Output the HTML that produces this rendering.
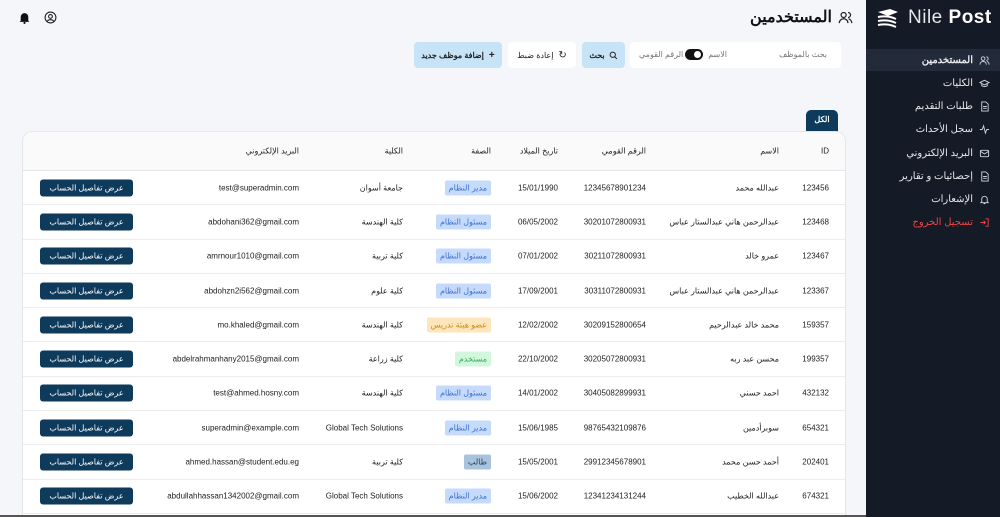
<!DOCTYPE html>
<html style="width:1000px;height:517px;overflow:hidden"><head><meta charset="utf-8"><style>
*{box-sizing:border-box;margin:0;padding:0}
body{width:1000px;height:517px;overflow:hidden;background:#f5f6fa;font-family:"Liberation Sans","Noto Sans CJK SC",sans-serif;position:relative;color:#222}
.abs{position:absolute}
.side{left:866px;top:0;width:134px;height:517px;background:#141a26}
.nav{position:absolute;right:0;width:134px;height:22px;display:flex;align-items:center;justify-content:flex-end;gap:6px;padding-right:10px;font-size:10px;color:#e5e7eb;direction:ltr}
.nav svg{width:11px;height:11px;stroke:#cbd5e1;fill:none;stroke-width:2}
.card{left:22px;top:131px;width:824px;height:386px;background:#fff;border:1px solid #e3e6ea;border-bottom:none;border-radius:10px 10px 0 0;overflow:hidden}
.hdr{position:absolute;left:0;top:0;width:824px;height:39px;background:#fafafa;border-bottom:1px solid #e5e7eb}
.row{position:absolute;left:0;width:824px;height:34.3px;border-bottom:1px solid #ececec}
.c{position:absolute;top:50%;transform:translateY(-50%);font-size:8px;color:#222;white-space:nowrap}
.r{direction:rtl}
.b{padding:3px 4px;border-radius:2px;font-size:8px}
.blue{background:#c6dbfb;color:#3c6fcf}
.org{background:#fde6bb;color:#c98a1a}
.grn{background:#d3f7dd;color:#2fae5a}
.stu{background:#a9c3dd;color:#1f3f66}
.btn{position:absolute;left:17px;top:50%;transform:translateY(-50%);width:93px;height:17px;background:#0e3a5c;color:#fff;font-size:8px;border-radius:3px;display:flex;align-items:center;justify-content:center}
</style></head><body>
<div class="abs side">
 <div class="abs" style="left:10px;top:7px;display:flex;align-items:center;gap:6px">
  <svg width="26" height="20" viewBox="0 0 26 20"><path d="M2 4 L14 1 L22 4 L12 8Z" fill="#fff"/><path d="M2 9 Q12 7 20 11 M2 13 Q12 11 20 15 M2 17 Q12 15 20 19" stroke="#fff" stroke-width="2" fill="none"/></svg>
  <span style="color:#fff;font-size:19px;letter-spacing:0.5px"><span style="font-weight:300;color:#e5e7eb">Nile</span> <b>Post</b></span>
 </div>
 <div class="nav" style="top:49px;background:#232b3a;font-weight:bold">المستخدمين<svg viewBox="0 0 24 24"><circle cx="9" cy="8" r="4"/><path d="M2 21c0-4 3-7 7-7s7 3 7 7M16 4a4 4 0 010 8M22 21c0-3-2-6-5-7"/></svg></div>
 <div class="nav" style="top:72px">الكليات<svg viewBox="0 0 24 24"><path d="M2 10l10-5 10 5-10 5z M6 12v5c3 2 9 2 12 0v-5"/></svg></div>
 <div class="nav" style="top:95px">طلبات التقديم<svg viewBox="0 0 24 24"><path d="M6 2h9l5 5v15H6z M9 12h8M9 16h8"/></svg></div>
 <div class="nav" style="top:118px">سجل الأحداث<svg viewBox="0 0 24 24"><path d="M2 12h5l3-8 4 16 3-8h5"/></svg></div>
 <div class="nav" style="top:142px">البريد الإلكتروني<svg viewBox="0 0 24 24"><rect x="3" y="5" width="18" height="14" rx="2"/><path d="M3 7l9 6 9-6"/></svg></div>
 <div class="nav" style="top:165px">إحصائيات و تقارير<svg viewBox="0 0 24 24"><path d="M6 2h9l5 5v15H6z M9 12h8M9 16h8"/></svg></div>
 <div class="nav" style="top:188px">الإشعارات<svg viewBox="0 0 24 24"><path d="M6 17V11a6 6 0 0112 0v6l2 2H4z M10 21h4"/></svg></div>
 <div class="nav" style="top:211px;color:#ef4444">تسجيل الخروج<svg viewBox="0 0 24 24" style="stroke:#ef4444"><path d="M14 4h6v16h-6 M3 12h11 M10 8l4 4-4 4"/></svg></div>
</div>

<div class="abs" style="right:147px;top:7px;display:flex;align-items:center;gap:6px;direction:ltr">
 <span style="font-size:16px;font-weight:bold;color:#111">المستخدمين</span>
 <svg width="15" height="15" viewBox="0 0 24 24" fill="none" stroke="#222" stroke-width="2"><circle cx="9" cy="8" r="4"/><path d="M2 21c0-4 3-7 7-7s7 3 7 7M16 4a4 4 0 010 8M22 21c0-3-2-6-5-7"/></svg>
</div>
<svg class="abs" style="left:18px;top:11px" width="13" height="13" viewBox="0 0 24 24"><path d="M5 18V11a7 7 0 0114 0v7l2 2H3z" fill="#111"/><circle cx="12" cy="22" r="2" fill="#111"/></svg>
<svg class="abs" style="left:44px;top:11px" width="13" height="13" viewBox="0 0 24 24" fill="none" stroke="#222" stroke-width="2"><circle cx="12" cy="12" r="10"/><circle cx="12" cy="10" r="3.5"/><path d="M6 19c2-4 10-4 12 0"/></svg>

<div class="abs" style="left:630px;top:42px;width:211px;height:26px;background:#fff;border-radius:4px;font-size:8px;color:#777">
 <span class="abs" style="right:14px;top:8px">بحث بالموظف</span>
 <span class="abs" style="right:114px;top:8px">الاسم</span>
 <div class="abs" style="left:55px;top:7px;width:18px;height:11px;background:#111;border-radius:6px"><div style="position:absolute;right:2px;top:2px;width:7px;height:7px;border-radius:50%;background:#fff"></div></div>
 <span class="abs" style="left:9px;top:8px">الرقم القومي</span>
</div>
<div class="abs" style="left:582px;top:42px;width:43px;height:26px;background:#c7e3f7;border-radius:4px;font-size:8px;font-weight:bold;display:flex;align-items:center;justify-content:center;gap:4px">بحث <svg width="9" height="9" viewBox="0 0 24 24" fill="none" stroke="#222" stroke-width="2.5"><circle cx="10" cy="10" r="7"/><path d="M15 15l6 6"/></svg></div>
<div class="abs" style="left:508px;top:42px;width:68px;height:26px;background:#fff;border-radius:4px;font-size:8px;display:flex;align-items:center;justify-content:center;gap:5px;direction:rtl"><span style="font-size:10px">↻</span>إعادة ضبط</div>
<div class="abs" style="left:414px;top:42px;width:88px;height:26px;background:#c7e3f7;border-radius:4px;font-size:8px;font-weight:bold;display:flex;align-items:center;justify-content:center;gap:5px;direction:rtl"><span style="font-size:10px">+</span>إضافة موظف جديد</div>

<div class="abs" style="left:806px;top:110px;width:32px;height:22px;background:#0e3a5c;border-radius:5px 5px 0 0;color:#fff;font-size:8px;font-weight:bold;text-align:center;line-height:20px">الكل</div>

<div class="abs card">
 <div class="hdr">
  <span class="c" style="right:18px">ID</span>
  <span class="c" style="right:68px">الاسم</span>
  <span class="c" style="right:201px">الرقم القومي</span>
  <span class="c" style="right:289px">تاريخ الميلاد</span>
  <span class="c" style="right:356px">الصفة</span>
  <span class="c" style="right:444px">الكلية</span>
  <span class="c" style="right:548px">البريد الإلكتروني</span>
 </div>
</div>
<div class="abs" style="left:0;top:515px;width:866px;height:2px;background:#555"></div>
<script>
var d=[["123456","عبدالله محمد","12345678901234","15/01/1990","مدير النظام","blue","جامعة أسوان","test@superadmin.com"],
["123468","عبدالرحمن هاني عبدالستار عباس","30201072800931","06/05/2002","مسئول النظام","blue","كلية الهندسة","abdohani362@gmail.com"],
["123467","عمرو خالد","30211072800931","07/01/2002","مسئول النظام","blue","كلية تربية","amrnour1010@gmail.com"],
["123367","عبدالرحمن هاني عبدالستار عباس","30311072800931","17/09/2001","مسئول النظام","blue","كلية علوم","abdohzn2i562@gmail.com"],
["159357","محمد خالد عبدالرحيم","30209152800654","12/02/2002","عضو هيئة تدريس","org","كلية الهندسة","mo.khaled@gmail.com"],
["199357","محسن عبد ربه","30205072800931","22/10/2002","مستخدم","grn","كلية زراعة","abdelrahmanhany2015@gmail.com"],
["432132","احمد حسني","30405082899931","14/01/2002","مسئول النظام","blue","كلية الهندسة","test@ahmed.hosny.com"],
["654321","سوبرأدمين","98765432109876","15/06/1985","مدير النظام","blue","Global Tech Solutions","superadmin@example.com"],
["202401","أحمد حسن محمد","29912345678901","15/05/2001","طالب","stu","كلية تربية","ahmed.hassan@student.edu.eg"],
["674321","عبدالله الخطيب","12341234131244","15/06/2002","مدير النظام","blue","Global Tech Solutions","abdullahhassan1342002@gmail.com"]];
var card=document.querySelector('.card'),h='';
d.forEach(function(r,i){
h+='<div class="row" style="top:'+(39+i*34.3)+'px">'+
'<span class="c" style="right:18px">'+r[0]+'</span>'+
'<span class="c r" style="right:68px">'+r[1]+'</span>'+
'<span class="c" style="right:201px">'+r[2]+'</span>'+
'<span class="c" style="right:289px">'+r[3]+'</span>'+
'<span class="c r b '+r[5]+'" style="right:356px">'+r[4]+'</span>'+
'<span class="c r" style="right:444px">'+r[6]+'</span>'+
'<span class="c" style="right:548px">'+r[7]+'</span>'+
'<div class="btn">عرض تفاصيل الحساب</div></div>';});
card.insertAdjacentHTML('beforeend',h);
</script>
</body></html>
